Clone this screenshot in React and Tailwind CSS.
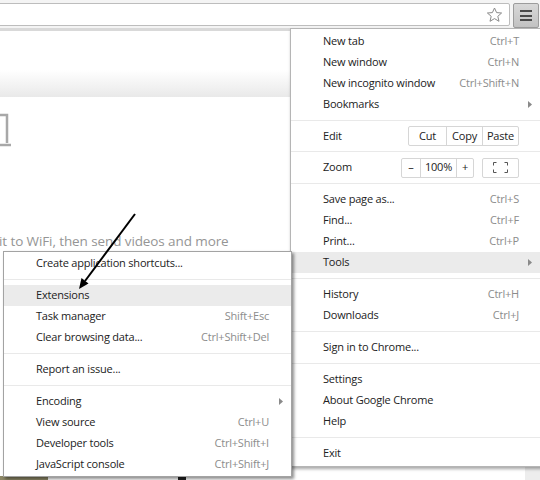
import React from "react";

const mainItems = [
  { label: "New tab", shortcut: "Ctrl+T" },
  { label: "New window", shortcut: "Ctrl+N" },
  { label: "New incognito window", shortcut: "Ctrl+Shift+N" },
  { label: "Bookmarks", arrow: true },
  { sep: true },
  { edit: true },
  { sep: true },
  { zoom: true },
  { sep: true },
  { label: "Save page as...", shortcut: "Ctrl+S" },
  { label: "Find...", shortcut: "Ctrl+F" },
  { label: "Print...", shortcut: "Ctrl+P" },
  { label: "Tools", arrow: true, active: true },
  { sep: true },
  { label: "History", shortcut: "Ctrl+H" },
  { label: "Downloads", shortcut: "Ctrl+J" },
  { sep: true },
  { label: "Sign in to Chrome..." },
  { sep: true },
  { label: "Settings" },
  { label: "About Google Chrome" },
  { label: "Help" },
  { sep: true },
  { label: "Exit" },
];

const toolItems = [
  { label: "Create application shortcuts..." },
  { sep: true },
  { label: "Extensions", active: true },
  { label: "Task manager", shortcut: "Shift+Esc" },
  { label: "Clear browsing data...", shortcut: "Ctrl+Shift+Del" },
  { sep: true },
  { label: "Report an issue..." },
  { sep: true },
  { label: "Encoding", arrow: true },
  { label: "View source", shortcut: "Ctrl+U" },
  { label: "Developer tools", shortcut: "Ctrl+Shift+I" },
  { label: "JavaScript console", shortcut: "Ctrl+Shift+J" },
];

const Arrow = () => (
  <svg width="4" height="7" viewBox="0 0 4 7" className="shrink-0">
    <path d="M0 0 L4 3.5 L0 7 Z" fill="#8a8a8a" />
  </svg>
);

const Separator = () => (
  <div className="h-[11px] flex items-center">
    <div className="h-px w-full bg-[#e9e9e9]" />
  </div>
);

const Btn = ({ children, className = "" }) => (
  <div
    className={`h-full flex items-center justify-center border-l border-[#d6d6d6] first:border-l-0 ${className}`}
  >
    {children}
  </div>
);

const EditRow = () => (
  <div className="h-[20px] flex items-center pl-[32px] pr-[10px]">
    <span className="flex-1">Edit</span>
    <div className="flex h-[20px] mr-[13px] border border-[#d6d6d6] rounded-[2px]">
      <Btn className="w-[37px]">Cut</Btn>
      <Btn className="w-[36px]">Copy</Btn>
      <Btn className="w-[36px]">Paste</Btn>
    </div>
  </div>
);

const ZoomRow = () => (
  <div className="h-[21px] flex items-center pl-[32px] pr-[10px]">
    <span className="flex-1">Zoom</span>
    <div className="flex h-[20px] border border-[#d6d6d6] rounded-[2px]">
      <Btn className="w-[18px]">–</Btn>
      <Btn className="w-[36px]">100%</Btn>
      <Btn className="w-[17px]">+</Btn>
    </div>
    <div className="ml-[8px] mr-[13px] w-[37px] h-[20px] border border-[#d6d6d6] rounded-[2px] flex items-center justify-center">
      <svg width="15" height="11" viewBox="0 0 15 11">
        <path
          d="M0.5 3.5 V0.5 H3.5 M11.5 0.5 H14.5 V3.5 M14.5 7.5 V10.5 H11.5 M3.5 10.5 H0.5 V7.5"
          fill="none"
          stroke="#555"
          strokeWidth="1"
        />
      </svg>
    </div>
  </div>
);

const Menu = ({ items, pr, scMr, className }) => (
  <div className={className}>
    {items.map((it, i) => {
      if (it.sep) return <Separator key={i} />;
      if (it.edit) return <EditRow key={i} />;
      if (it.zoom) return <ZoomRow key={i} />;
      return (
        <div
          key={i}
          className={`h-[21px] flex items-center pl-[32px] ${pr} ${
            it.active ? "bg-[#ebebeb]" : ""
          }`}
        >
          <span className="flex-1 whitespace-nowrap">{it.label}</span>
          {it.shortcut && (
            <span className={`text-[#8c8c8c] whitespace-nowrap ${scMr}`}>
              {it.shortcut}
            </span>
          )}
          {it.arrow && <Arrow />}
        </div>
      );
    })}
  </div>
);

export default function App() {
  return (
    <div className="relative w-[540px] h-[480px] overflow-hidden bg-white font-['Open_Sans',sans-serif] text-[11px] tracking-[-0.2px] text-[#222]">
      {/* toolbar */}
      <div className="h-[31px] bg-[#f4f4f4] border-b-[3px] border-[#d9d9d9] flex items-start">
        <div className="ml-[-4px] mt-[3px] flex-1 h-[23px] bg-white border border-[#bdbdbd] rounded-[2px] flex items-center justify-end pr-[6px]">
          <svg width="17" height="16" viewBox="0 0 17 16">
            <path
              d="M8.5 1 L10.6 5.6 L15.6 6 L11.8 9.3 L13 14.3 L8.5 11.6 L4 14.3 L5.2 9.3 L1.4 6 L6.4 5.6 Z"
              fill="none"
              stroke="#8a8a8a"
              strokeWidth="1"
              strokeLinejoin="round"
            />
          </svg>
        </div>
        <div className="ml-[3px] mr-[1px] mt-[3px] w-[26px] h-[25px] rounded-[2px] border border-[#9c9c9c] bg-gradient-to-b from-[#d8d8d8] to-[#c2c2c2] flex flex-col items-center justify-center gap-[2.5px]">
          <div className="w-[12px] h-[2px] bg-[#4a4a4a]" />
          <div className="w-[12px] h-[2px] bg-[#4a4a4a]" />
          <div className="w-[12px] h-[2px] bg-[#4a4a4a]" />
        </div>
      </div>

      {/* page */}
      <div className="flex h-[449px]">
        <div className="flex-1 flex flex-col">
          <div className="h-[39px]" />
          <div className="h-[27px] bg-gradient-to-b from-white to-[#e9e9e9]" />
          <div className="h-[15px]" />
          <svg width="12" height="36" viewBox="0 0 12 36">
            <path d="M0 3 H7 V31" fill="none" stroke="#a8a8a8" strokeWidth="2.5" />
            <path d="M0 33 H11" fill="none" stroke="#a8a8a8" strokeWidth="2.5" />
          </svg>
          <div className="h-[83px]" />
          <p className="text-[13.5px] tracking-[-0.1px] leading-[20px] text-[#959595] whitespace-nowrap ml-[-1px]">
            it to WiFi, then send videos and more
          </p>
          <div className="flex-1" />
          <div className="h-[4px] flex">
            <div className="w-[48px] bg-[#8c8766]" />
            <div className="w-[130px]" />
            <div className="w-[8px] bg-[#222]" />
          </div>
        </div>
        <div className="w-[15px] bg-[#ededed]" />
      </div>

      {/* main chrome menu */}
      <Menu
        items={mainItems}
        pr="pr-[10px]"
        scMr="mr-[13px]"
        className="absolute left-[290px] top-[28px] w-[253px] pt-[2px] pb-[2px] bg-white border border-[#b5b5b5] shadow-[1px_2px_3px_rgba(0,0,0,0.35)]"
      />

      {/* tools submenu */}
      <Menu
        items={toolItems}
        pr="pr-[8px]"
        scMr="mr-[14px]"
        className="absolute left-[3px] top-[251px] w-[289px] pt-[1px] pb-[1px] bg-white border border-[#a3a3a3] shadow-[2px_2px_3px_rgba(0,0,0,0.45)]"
      />

      {/* annotation arrow */}
      <svg
        className="absolute left-0 top-0 pointer-events-none"
        width="540"
        height="480"
        viewBox="0 0 540 480"
      >
        <line x1="135" y1="214" x2="85" y2="281" stroke="#000" strokeWidth="2" />
        <polygon points="79,289 88.5,283.5 81.5,278" fill="#000" />
      </svg>
    </div>
  );
}
